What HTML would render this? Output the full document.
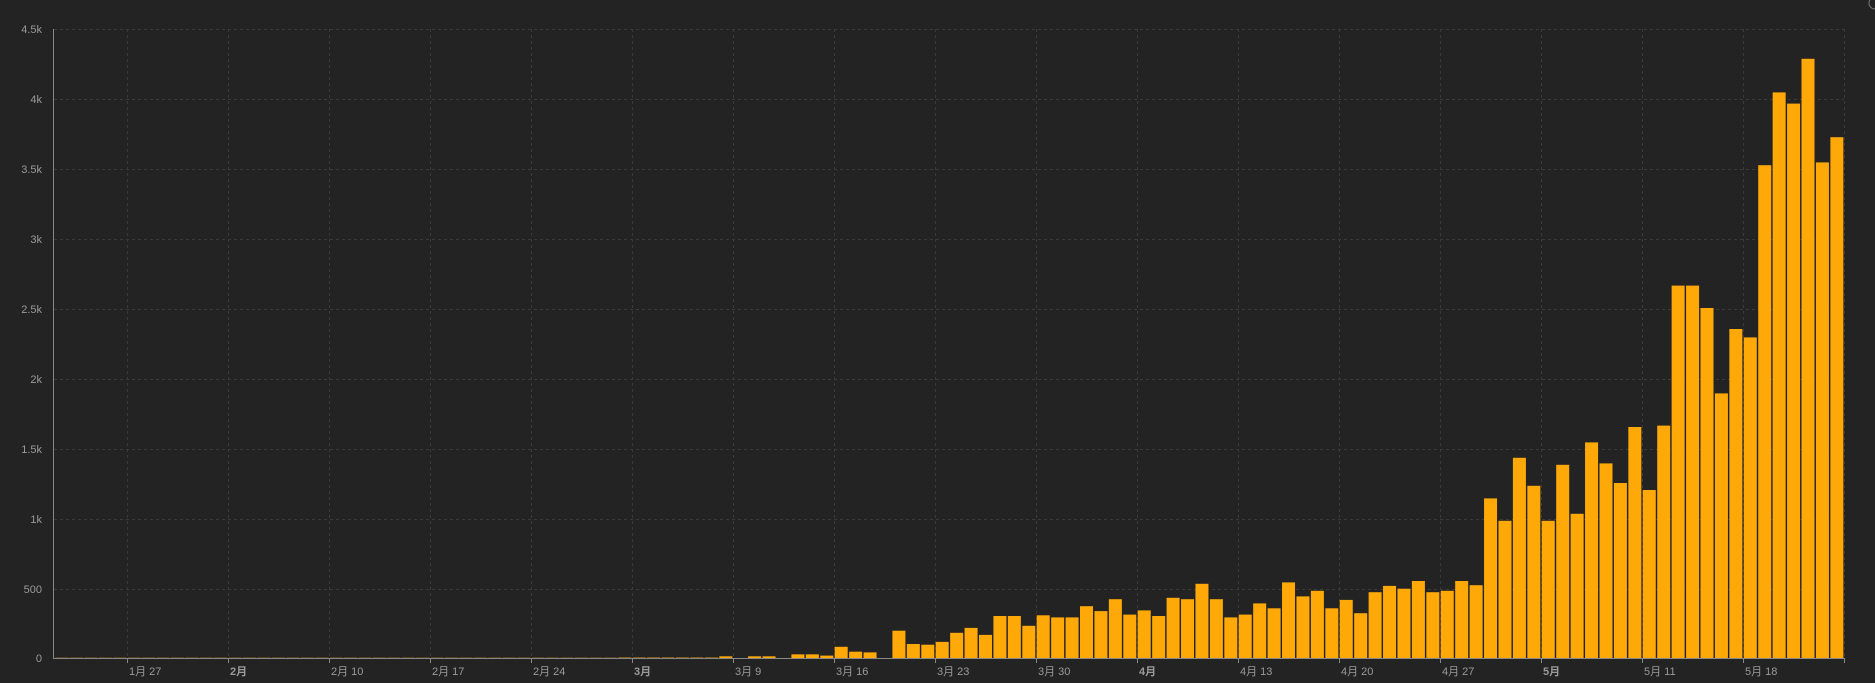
<!DOCTYPE html>
<html><head><meta charset="utf-8"><style>
html,body{margin:0;padding:0;background:#232323;width:1875px;height:683px;overflow:hidden}
svg text{font-family:"Liberation Sans","Noto Sans CJK SC",sans-serif;font-size:11px;fill:#9a9a9a}
</style></head><body>
<svg id="c" width="1875" height="683" xmlns="http://www.w3.org/2000/svg">
<g id="grid" stroke="#3a3a3a" stroke-width="1" stroke-dasharray="3,3"></g>
<g id="bars" fill="#ffa908"></g>
<line x1="53.5" y1="29" x2="53.5" y2="658" stroke="#888"/>
<line x1="53" y1="658.5" x2="1844" y2="658.5" stroke="#888"/>
<g id="ticks" stroke="#888"></g>
<g text-anchor="end">
<text x="42" y="33">4.5k</text><text x="42" y="103">4k</text><text x="42" y="173">3.5k</text>
<text x="42" y="243">3k</text><text x="42" y="313">2.5k</text><text x="42" y="383">2k</text>
<text x="42" y="453">1.5k</text><text x="42" y="523">1k</text><text x="42" y="593">500</text>
<text x="42" y="662">0</text>
</g>
<g>
<text x="129" y="675">1月 27</text><text x="230" y="675" font-weight="bold">2月</text>
<text x="331" y="675">2月 10</text><text x="432" y="675">2月 17</text><text x="533" y="675">2月 24</text>
<text x="634" y="675" font-weight="bold">3月</text><text x="735" y="675">3月 9</text>
<text x="836" y="675">3月 16</text><text x="937" y="675">3月 23</text><text x="1038" y="675">3月 30</text>
<text x="1139" y="675" font-weight="bold">4月</text><text x="1240" y="675">4月 13</text>
<text x="1341" y="675">4月 20</text><text x="1442" y="675">4月 27</text>
<text x="1543" y="675" font-weight="bold">5月</text><text x="1644" y="675">5月 11</text><text x="1745" y="675">5月 18</text>
</g>
<circle cx="1875" cy="3" r="6" fill="none" stroke="#777"/>
</svg>
<script>
var ns="http://www.w3.org/2000/svg";
function el(p,t,a){var e=document.createElementNS(ns,t);for(var k in a)e.setAttribute(k,a[k]);document.getElementById(p).appendChild(e);}
for(var i=0;i<9;i++){var y=29.5+i*70;el("grid","line",{x1:54,y1:y,x2:1844,y2:y});}
var ticks=[];for(var i=0;i<17;i++)ticks.push(126.8+i*101);ticks.push(1844);
ticks.forEach(function(x){x=Math.round(x)+0.5;el("grid","line",{x1:x,y1:29,x2:x,y2:658});el("ticks","line",{x1:x,y1:658,x2:x,y2:663});});
var d=[];for(var i=0;i<46;i++)d.push(i>38?3:1.5);
d=d.concat([12,0,12,12,0,26,26,17,80,45,40,0]);
d=d.concat([195,100,95,115,180,215,165,300,300,230,305,290,290,370,335,420,310,340,300,430,420,530,420,290,310,390,355,540,440,480,355,415,320,470,515,495,550,470,480,550,520,1140,980,1430,1230,980,1380,1030,1540,1390,1250,1650,1200,1660,2660,2660,2500,1890,2350,2290,3520,4040,3960,4280,3540,3720]);
var x0=1844-d.length*14.43;
d.forEach(function(v,i){if(v<=0)return;var h=v*70/500;var x=x0+i*14.43+0.8;
el("bars","rect",{x:x.toFixed(2),y:(658-h).toFixed(2),width:13,height:h.toFixed(2)});});
</script>
</body></html>
